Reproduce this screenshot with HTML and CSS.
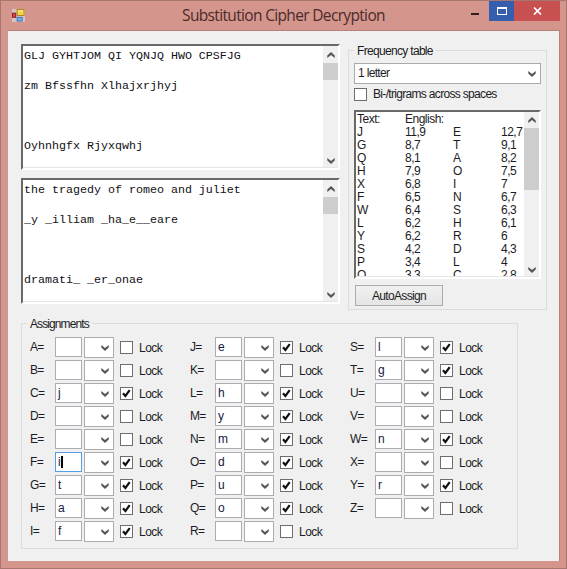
FILE: index.html
```html
<!DOCTYPE html>
<html lang="en">
<head>
<meta charset="utf-8">
<title>Substitution Cipher Decryption</title>
<link rel="stylesheet" href="styles.css">
</head>
<body>
<svg class="defs" aria-hidden="true">
  <symbol id="down" viewBox="0 0 8 6"><path d="M.3 0L4 3L7.7 0V2.6L4 6L.3 2.6Z" fill="#555"/></symbol>
  <symbol id="up" viewBox="0 0 8 6"><path d="M.3 6L4 3L7.7 6V3.4L4 0L.3 3.4Z" fill="#555"/></symbol>
  <symbol id="tick" viewBox="0 0 11 11"><path d="M2 5.2L4.4 8L8.7 2.2" fill="none" stroke="#111" stroke-width="2.2"/></symbol>
</svg>
<div class="window">
  <header class="titlebar">
    <svg class="app-icon" width="13" height="13" viewBox="0 0 14 14">
      <rect width="14" height="14" fill="#d9c3bf"/>
      <rect x="5.5" y=".5" width="7.5" height="6.5" fill="#f3d34a" stroke="#a98016"/>
      <path d="M6.5 2h5.5" stroke="#fff1a0"/>
      <rect x=".5" y="4.5" width="3.5" height="4.5" fill="#d4474a" stroke="#8c1720"/>
      <rect x="5.5" y="9" width="5.5" height="4" fill="#72aeea" stroke="#3971b5"/>
    </svg>
    <h1 class="title">Substitution Cipher Decryption</h1>
    <div class="controls">
      <span class="control minimize"><i></i></span>
      <span class="control maximize"><i></i></span>
      <span class="control close"><svg width="9" height="8" viewBox="0 0 9 8"><path d="M1 .5L8 7.5M8 .5L1 7.5" stroke="#fff" stroke-width="1.7"/></svg></span>
    </div>
  </header>
  <main class="client">
    <div class="upper">
      <div class="texts">
        <div class="sunken cipher">
          <pre class="mono">GLJ GYHTJOM QI YQNJQ HWO CPSFJG

zm Bfssfhn Xlhajxrjhyj



Oyhnhgfx Rjyxqwhj</pre>
          <div class="scroll"><svg class="arrow"><use href="#up"/></svg><i class="thumb"></i><svg class="arrow last"><use href="#down"/></svg></div>
        </div>
        <div class="sunken plain">
          <pre class="mono">the tragedy of romeo and juliet

_y _illiam _ha_e__eare



dramati_ _er_onae</pre>
          <div class="scroll"><svg class="arrow"><use href="#up"/></svg><i class="thumb"></i><svg class="arrow last"><use href="#down"/></svg></div>
        </div>
      </div>
      <section class="group frequency">
        <h2 class="legend">Frequency table</h2>
        <div class="select"><span>1 letter</span><svg class="arrow"><use href="#down"/></svg></div>
        <div class="option"><span class="check"></span><span class="option-label">Bi-/trigrams across spaces</span></div>
        <div class="sunken list">
          <div class="table" id="table"><span>Text:</span><span>English:</span><span></span><span></span></div>
          <div class="scroll"><svg class="arrow"><use href="#up"/></svg><i class="thumb"></i><svg class="arrow last"><use href="#down"/></svg></div>
        </div>
        <div class="button">AutoAssign</div>
      </section>
    </div>
    <section class="group assignments">
      <h2 class="legend">Assignments</h2>
      <div class="columns" id="columns"></div>
    </section>
  </main>
</div>
<script src="script.js"></script>
</body>
</html>
```
FILE: styles.css
```css
* { box-sizing: border-box; }
body { margin: 0; font: 12px/13px "Liberation Sans", Arial, sans-serif; letter-spacing: -.68px; color: #1c1c24; }
h1, h2, pre { margin: 0; font-weight: 400; }
.defs { position: absolute; width: 0; height: 0; }
.window { width: 567px; height: 569px; padding: 0 7px; background: #d4958d; border: 1px solid #a9756f; display: flex; flex-direction: column; }
.titlebar { height: 29px; flex: none; display: flex; position: relative; padding: 8px 0 0 4px; }
.app-icon { display: block; }
.title { position: absolute; left: 0; right: 0; top: 4px; text-align: center; font: 15.5px/20px "Open Sans", sans-serif; letter-spacing: -.66px; color: #4b2b2a; }
.controls { position: absolute; right: -1px; top: 0; display: flex; height: 20px; }
.control { display: flex; align-items: center; justify-content: center; }
.minimize { width: 28px; }
.minimize i { width: 8px; height: 2px; background: #30201f; margin-top: 6px; }
.maximize { width: 25px; background: #355fae; }
.maximize i { width: 10px; height: 8px; border: 1px solid #fff; border-top-width: 2px; }
.close { width: 46px; background: #c75050; }
.client { height: 531px; flex: none; background: #f0f0f0; border: 1px solid #bb8179; border-width: 1px 1px 0 0; margin-right: -1px; padding: 13px 0 0 13px; }
.upper { display: flex; gap: 8px; height: 279px; }
.texts { width: 319px; display: flex; flex-direction: column; gap: 8px; }
.sunken { background: #fff; border: 2px solid; border-color: #696969 #fff #fff #696969; display: flex; justify-content: space-between; overflow: hidden; box-shadow: inset -1px -1px #e5e5e5; padding-bottom: 1px; }
.cipher, .plain { height: 126px; }
.mono { font: 11.67px/15px "Liberation Mono", monospace; letter-spacing: 0; color: #101014; padding: 3px 0 0 1px; }
.scroll { width: 15px; flex: none; background: #f0f0f0; display: flex; flex-direction: column; align-items: center; padding: 6px 0 3px; }
.arrow { width: 8px; height: 6px; flex: none; display: block; }
.thumb { width: 15px; height: 17px; background: #cdcdcd; margin-top: 5px; flex: none; }
.last { margin-top: auto; }
.group { border: 1px solid #dcdcdc; position: relative; }
.legend { position: absolute; left: 5px; top: -6px; padding: 0 3px; background: #f0f0f0; font-size: inherit; line-height: 13px; white-space: nowrap; }
.frequency { width: 199px; height: 260px; margin-top: 6px; padding: 12px 5px 0; }
.select { height: 21px; width: 187px; background: #fff; border: 1px solid #a9a9a9; display: flex; align-items: center; justify-content: space-between; padding: 0 4px 0 3px; }
.option { display: flex; height: 13px; margin-top: 4px; gap: 6px; }
.check { width: 13px; height: 13px; flex: none; border: 1px solid #6e6e6e; background: #fff; display: block; }
.check svg { width: 11px; height: 11px; display: block; }
.list { width: 187px; height: 169px; margin-top: 9px; }
.list .scroll { padding-top: 5px; }
.table { display: grid; grid-template-columns: 48px 48px 48px 22px; grid-auto-rows: 13px; padding: 1px 0 0 1px; width: 167px; overflow: hidden; white-space: nowrap; letter-spacing: -.5px; }
.list .thumb { height: 62px; margin-top: 5px; }
.button { width: 88px; height: 21px; margin: 6px 0 0 1px; border: 1px solid #acacac; background: linear-gradient(#f0f0f0, #e5e5e5); text-align: center; line-height: 20px; }
.assignments { width: 497px; height: 226px; padding: 13px 0 0 8px; }
.assignments .legend { letter-spacing: -.9px; }
.columns { display: flex; }
.column { width: 160px; display: flex; flex-direction: column; gap: 2px; }
.row { height: 21px; display: flex; }
.name { width: 25px; padding-top: 4px; }
.entry { width: 27px; height: 20px; border: 1px solid #abadb3; background: #fff; padding: 3px 0 0 2px; margin-right: 2px; color: #172044; display: flex; }
.entry.focus { border-color: #569de5; }
.caret { width: 2px; height: 12px; background: #000; display: block; margin-left: 1px; }
.pick { width: 30px; height: 21px; border: 1px solid #acacac; background: #fff; padding: 7px 4px 0 0; display: flex; justify-content: flex-end; }
.row .check { margin: 4px 6px 0; }
.lock { padding-top: 5px; letter-spacing: -.5px; }
```
FILE: script.js
```js
const frequencies = [
  ["J", "11,9", "E", "12,7"], ["G", "8,7", "T", "9,1"], ["Q", "8,1", "A", "8,2"],
  ["H", "7,9", "O", "7,5"], ["X", "6,8", "I", "7"], ["F", "6,5", "N", "6,7"],
  ["W", "6,4", "S", "6,3"], ["L", "6,2", "H", "6,1"], ["Y", "6,2", "R", "6"],
  ["S", "4,2", "D", "4,3"], ["P", "3,4", "L", "4"], ["O", "3,3", "C", "2,8"]
];
document.getElementById("table").insertAdjacentHTML("beforeend",
  frequencies.flat().map(v => `<span>${v}</span>`).join(""));

const key = { C: "j", F: "i", G: "t", H: "a", I: "f", J: "e", L: "h", M: "y", N: "m",
  O: "d", P: "u", Q: "o", S: "l", T: "g", W: "n", Y: "r" };
const row = c => `<div class="row"><span class="name">${c}=</span>
  <span class="entry${c === "F" ? " focus" : ""}">${key[c] || ""}${c === "F" ? '<i class="caret"></i>' : ""}</span>
  <span class="pick"><svg class="arrow"><use href="#down"/></svg></span>
  <span class="check">${key[c] ? '<svg><use href="#tick"/></svg>' : ""}</span>
  <span class="lock">Lock</span></div>`;
document.getElementById("columns").innerHTML = ["ABCDEFGHI", "JKLMNOPQR", "STUVWXYZ"]
  .map(letters => `<div class="column">${[...letters].map(row).join("")}</div>`).join("");
```
